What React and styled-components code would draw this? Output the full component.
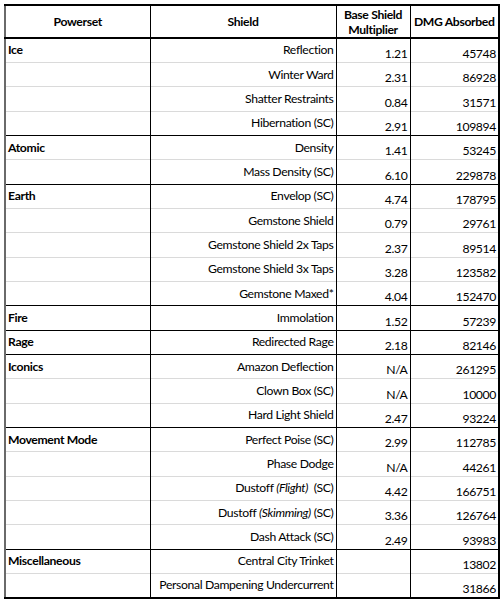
import React from 'react'
import styled, { createGlobalStyle } from 'styled-components'

const groups = [
  {
    name: 'Ice',
    rows: [
      ['Reflection', '1.21', '45748'],
      ['Winter Ward', '2.31', '86928'],
      ['Shatter Restraints', '0.84', '31571'],
      ['Hibernation (SC)', '2.91', '109894'],
    ],
  },
  {
    name: 'Atomic',
    rows: [
      ['Density', '1.41', '53245'],
      ['Mass Density (SC)', '6.10', '229878'],
    ],
  },
  {
    name: 'Earth',
    rows: [
      ['Envelop (SC)', '4.74', '178795'],
      ['Gemstone Shield', '0.79', '29761'],
      ['Gemstone Shield 2x Taps', '2.37', '89514'],
      ['Gemstone Shield 3x Taps', '3.28', '123582'],
      ['Gemstone Maxed*', '4.04', '152470'],
    ],
  },
  { name: 'Fire', rows: [['Immolation', '1.52', '57239']] },
  { name: 'Rage', rows: [['Redirected Rage', '2.18', '82146']] },
  {
    name: 'Iconics',
    rows: [
      ['Amazon Deflection', 'N/A', '261295'],
      ['Clown Box (SC)', 'N/A', '10000'],
      ['Hard Light Shield', '2.47', '93224'],
    ],
  },
  {
    name: 'Movement Mode',
    rows: [
      ['Perfect Poise (SC)', '2.99', '112785'],
      ['Phase Dodge', 'N/A', '44261'],
      [<>Dustoff <i>(Flight)</i>&nbsp; (SC)</>, '4.42', '166751'],
      [<>Dustoff <i>(Skimming)</i> (SC)</>, '3.36', '126764'],
      ['Dash Attack (SC)', '2.49', '93983'],
    ],
  },
  {
    name: 'Miscellaneous',
    rows: [
      ['Central City Trinket', '', '13802'],
      ['Personal Dampening Undercurrent', '', '31866'],
    ],
  },
]

export default function App() {
  return (
    <>
      <GlobalStyle />
      <Sheet>
        <Table>
          <colgroup>
            <col style={{ width: 145 }} />
            <col style={{ width: 186 }} />
            <col style={{ width: 74 }} />
            <col style={{ width: 89 }} />
          </colgroup>
          <thead>
            <HeadRow>
              <HeadCell>Powerset</HeadCell>
              <HeadCell $divider>Shield</HeadCell>
              <HeadCell $divider>Base Shield<br />Multiplier</HeadCell>
              <HeadCell $divider>DMG Absorbed</HeadCell>
            </HeadRow>
          </thead>
          <tbody>
            {groups.map((g) =>
              g.rows.map(([shield, mult, dmg], i) => (
                <Row key={g.name + i}>
                  <SetCell $first={i === 0}>{i === 0 ? g.name : ''}</SetCell>
                  <ShieldCell $first={i === 0}>{shield}</ShieldCell>
                  <NumCell $first={i === 0}>{mult}</NumCell>
                  <NumCell $first={i === 0}>{dmg}</NumCell>
                </Row>
              ))
            )}
          </tbody>
        </Table>
      </Sheet>
    </>
  )
}

const GlobalStyle = createGlobalStyle`
  body {
    margin: 0;
    background: #fff;
    font-family: Lato, "Open Sans", sans-serif;
    color: #000;
  }
`

const Sheet = styled.div`
  width: 500px;
  height: 599px;
  padding: 4px 0 0 4px;
  box-sizing: border-box;
`

const Table = styled.table`
  border-collapse: collapse;
  table-layout: fixed;
  width: 494px;
  border: 2px solid #000;
  border-left-color: #6a6a6a;
  font-size: 12.2px;
  letter-spacing: -0.35px;
`

const HeadRow = styled.tr`
  height: 32px;
`

const HeadCell = styled.th`
  font-weight: 700;
  text-align: center;
  vertical-align: middle;
  line-height: 14.5px;
  padding: 2px 2px 0;
  border-bottom: 2px solid #000;
  border-left: ${(p) => (p.$divider ? '1px solid #000' : 'none')};
`

const Row = styled.tr`
  height: 24.35px;
`

const Cell = styled.td`
  padding: 0 2px 0 3px;
  border-top: 1px solid ${(p) => (p.$first ? '#000' : '#dadada')};
  white-space: nowrap;
  overflow: hidden;
`

const SetCell = styled(Cell)`
  font-weight: 700;
  text-align: left;
  vertical-align: middle;
  padding-left: 2px;
  padding-bottom: 1px;
`

const ShieldCell = styled(Cell)`
  text-align: right;
  vertical-align: middle;
  padding-bottom: 1px;
  border-left: 1px solid #000;
`

const NumCell = styled(Cell)`
  text-align: right;
  vertical-align: bottom;
  padding-bottom: 1px;
  border-left: 1px solid #000;
`
